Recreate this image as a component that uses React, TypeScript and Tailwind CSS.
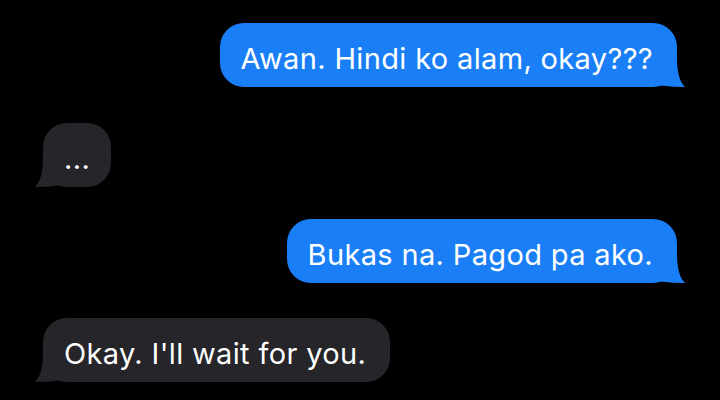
const blue = "#1a7ff7";
const gray = "#262529";

function Tail({ color, side }: { color: string; side: "left" | "right" }) {
  return (
    <svg
      width="28"
      height="30"
      viewBox="0 0 28 30"
      className={
        side === "right"
          ? "absolute bottom-0 right-[-8px]"
          : "absolute bottom-0 left-[-8px] scale-x-[-1]"
      }
    >
      <path d="M4 0 H20 C20 14 22 24 28 30 C20 30 12 29.5 4 28.5 Z" fill={color} />
    </svg>
  );
}

function Bubble({ text, mine, wide }: { text: string; mine?: boolean; wide?: boolean }) {
  const color = mine ? blue : gray;
  return (
    <div className={mine ? "flex justify-end" : "flex justify-start"}>
      <div
        className={
          "relative flex h-16 items-center rounded-[24px] pt-[7px] text-[29px] leading-none tracking-[0.35px] text-white " +
          (wide ? "px-[21px]" : "pl-[21px] pr-[24px]")
        }
        style={{ backgroundColor: color }}
      >
        <Tail color={color} side={mine ? "right" : "left"} />
        <span className="relative">{text}</span>
      </div>
    </div>
  );
}

export default function App() {
  return (
    <div
      className="h-[400px] w-[720px] overflow-hidden bg-black pl-[43px] pr-[43px] pt-[23px]"
      style={{ fontFamily: "Inter, 'Noto Sans', sans-serif" }}
    >
      <Bubble mine text="Awan. Hindi ko alam, okay???" />
      <div className="mt-[36px]">
        <Bubble wide text="..." />
      </div>
      <div className="mt-[32px]">
        <Bubble mine text="Bukas na. Pagod pa ako." />
      </div>
      <div className="mt-[35px]">
        <Bubble text="Okay. I'll wait for you." />
      </div>
    </div>
  );
}
